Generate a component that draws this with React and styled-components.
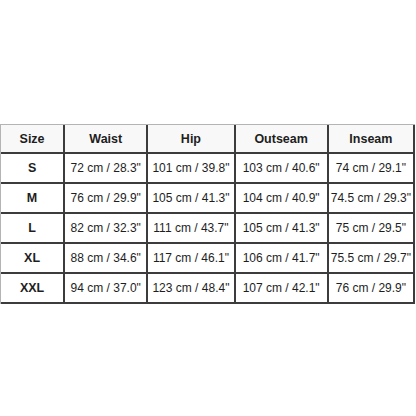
import React from "react";
import styled, { createGlobalStyle } from "styled-components";

const Global = createGlobalStyle`
  html, body { margin: 0; padding: 0; background: #ffffff; }
  body { font-family: "Liberation Sans", Arial, sans-serif; }
`;

const Page = styled.div`
  width: 416px;
  height: 416px;
  padding-top: 124px;
  box-sizing: border-box;
`;

const Table = styled.table`
  width: 415px;
  table-layout: fixed;
  border-collapse: separate;
  border-spacing: 0;
  border-top: 1px solid #b4b4b4;
  border-left: 1px solid #b4b4b4;
  font-family: "Liberation Sans", Arial, sans-serif;
  font-size: 12px;
  color: #1e1e1e;
`;

const Head = styled.th`
  height: 27px;
  padding: 0;
  text-align: center;
  font-weight: bold;
  font-size: 12.5px;
  background: #f8f8f8;
  border-right: 2px solid #3c3c3c;
  border-bottom: 2px solid #3c3c3c;
`;

const Cell = styled.td`
  height: 28px;
  padding: 0;
  text-align: center;
  white-space: nowrap;
  overflow: visible;
  font-weight: ${(p) => (p.$bold ? "bold" : "normal")};
  font-size: ${(p) => (p.$bold ? "12.5px" : "12px")};
  background: #ffffff;
  border-right: 2px solid #3c3c3c;
  border-bottom: 2px solid #3c3c3c;
`;

const widths = [64, 83, 87, 93, 86];
const headers = ["Size", "Waist", "Hip", "Outseam", "Inseam"];
const rows = [
  ["S", "72 cm / 28.3\"", "101 cm / 39.8\"", "103 cm / 40.6\"", "74 cm / 29.1\""],
  ["M", "76 cm / 29.9\"", "105 cm / 41.3\"", "104 cm / 40.9\"", "74.5 cm / 29.3\""],
  ["L", "82 cm / 32.3\"", "111 cm / 43.7\"", "105 cm / 41.3\"", "75 cm / 29.5\""],
  ["XL", "88 cm / 34.6\"", "117 cm / 46.1\"", "106 cm / 41.7\"", "75.5 cm / 29.7\""],
  ["XXL", "94 cm / 37.0\"", "123 cm / 48.4\"", "107 cm / 42.1\"", "76 cm / 29.9\""],
];

export default function App() {
  return (
    <Page>
      <Global />
      <Table>
        <colgroup>
          {widths.map((w, i) => (
            <col key={i} style={{ width: w }} />
          ))}
        </colgroup>
        <thead>
          <tr>
            {headers.map((h) => (
              <Head key={h}>{h}</Head>
            ))}
          </tr>
        </thead>
        <tbody>
          {rows.map((r) => (
            <tr key={r[0]}>
              {r.map((c, i) => (
                <Cell key={i} $bold={i === 0}>
                  {c}
                </Cell>
              ))}
            </tr>
          ))}
        </tbody>
      </Table>
    </Page>
  );
}
